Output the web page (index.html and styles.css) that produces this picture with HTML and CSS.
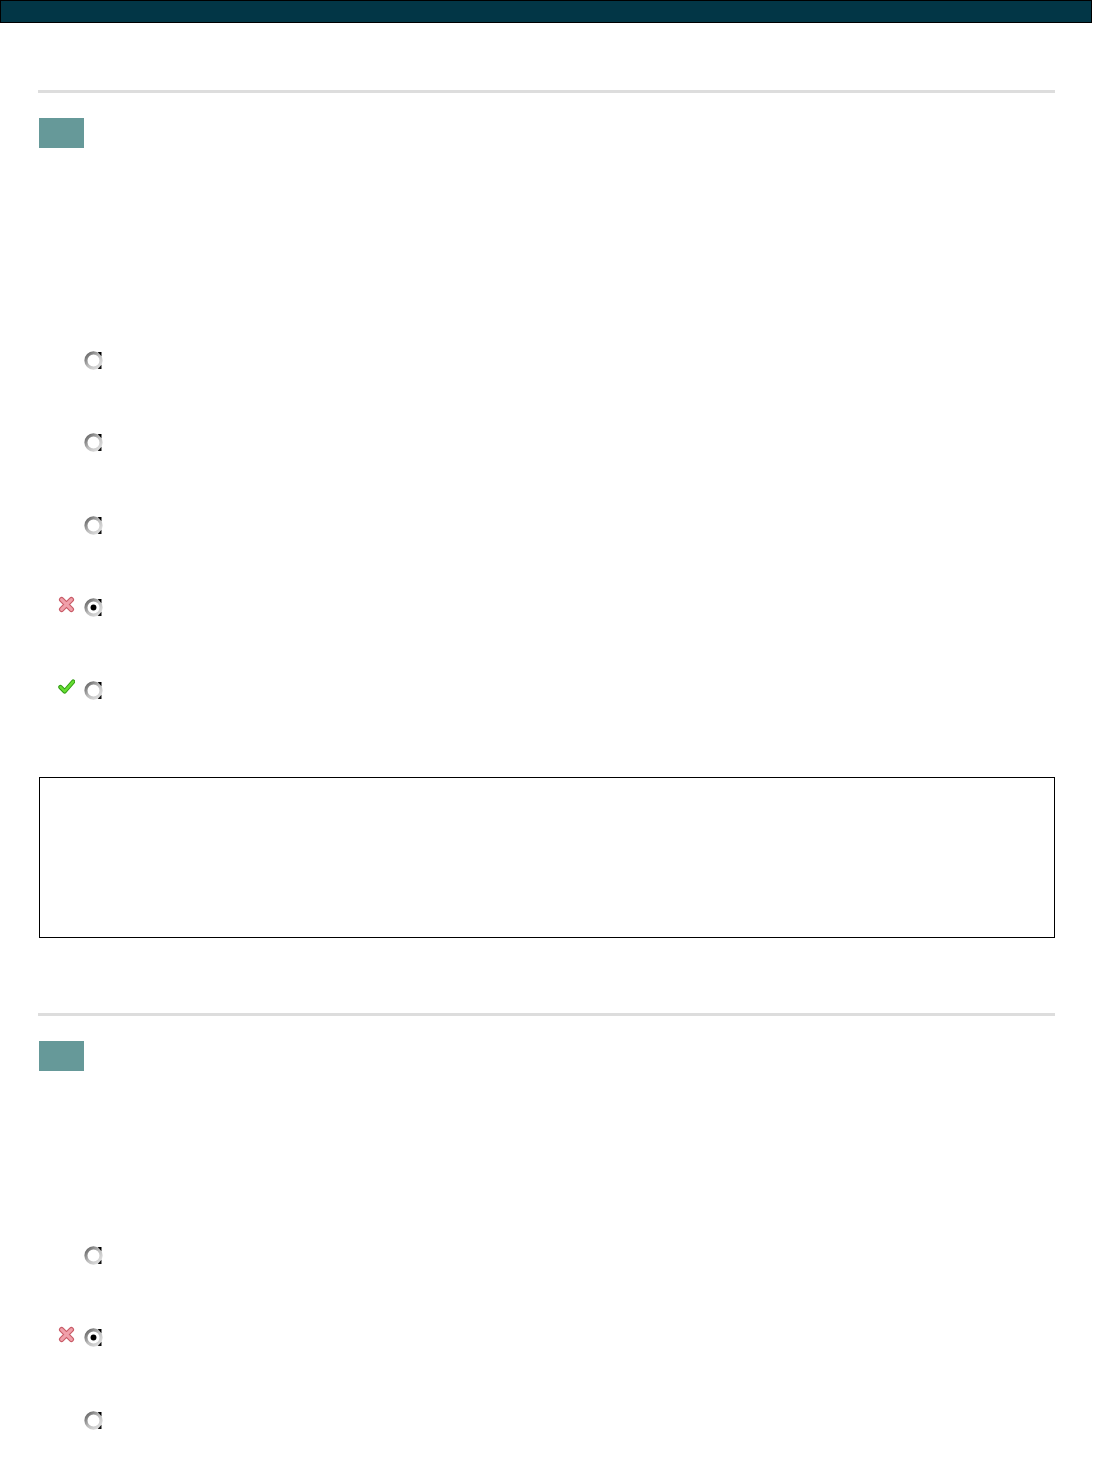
FILE: index.html
```html
<!DOCTYPE html>
<html>
<head>
<meta charset="utf-8">
<title>Quiz</title>
<link rel="stylesheet" href="styles.css">
</head>
<body>
<div class="topbar"></div>
<main class="page">
  <section class="question q1">
    <hr class="rule">
    <div class="qnum"></div>
    <div class="options first">
      <div class="opt"><span class="mark"></span><svg class="radio" viewBox="0 0 20 20"><use href="#r"/></svg></div>
      <div class="opt"><span class="mark"></span><svg class="radio" viewBox="0 0 20 20"><use href="#r"/></svg></div>
      <div class="opt"><span class="mark"></span><svg class="radio" viewBox="0 0 20 20"><use href="#r"/></svg></div>
      <div class="opt"><span class="mark"><svg viewBox="0 0 14 14" class="icon"><path d="M3 3 L11 11 M11 3 L3 11" stroke="#c85a66" stroke-width="4.4" stroke-linecap="round"/><path d="M3 3 L11 11 M11 3 L3 11" stroke="#f0a0aa" stroke-width="2.6" stroke-linecap="round"/></svg></span><svg class="radio" viewBox="0 0 20 20"><use href="#r"/><circle cx="10" cy="10" r="2.8" fill="#000"/></svg></div>
      <div class="opt"><span class="mark"><svg viewBox="0 0 14 14" class="icon"><path d="M2 7.5 L5.5 11 L12.5 3" fill="none" stroke="#2f9a10" stroke-width="3.6" stroke-linecap="round" stroke-linejoin="round"/><path d="M2 7.5 L5.5 11 L12.5 3" fill="none" stroke="#66dd33" stroke-width="2" stroke-linecap="round" stroke-linejoin="round"/></svg></span><svg class="radio" viewBox="0 0 20 20"><use href="#r"/></svg></div>
    </div>
    <div class="answerbox"></div>
  </section>
  <section class="question q2">
    <hr class="rule">
    <div class="qnum"></div>
    <div class="options second">
      <div class="opt"><span class="mark"></span><svg class="radio" viewBox="0 0 20 20"><use href="#r"/></svg></div>
      <div class="opt"><span class="mark"><svg viewBox="0 0 14 14" class="icon"><path d="M3 3 L11 11 M11 3 L3 11" stroke="#c85a66" stroke-width="4.4" stroke-linecap="round"/><path d="M3 3 L11 11 M11 3 L3 11" stroke="#f0a0aa" stroke-width="2.6" stroke-linecap="round"/></svg></span><svg class="radio" viewBox="0 0 20 20"><use href="#r"/><circle cx="10" cy="10" r="2.8" fill="#000"/></svg></div>
      <div class="opt"><span class="mark"></span><svg class="radio" viewBox="0 0 20 20"><use href="#r"/></svg></div>
    </div>
  </section>
</main>
<svg width="0" height="0" class="defs">
  <defs>
    <linearGradient id="g" x1="0" y1="0" x2="1" y2="1">
      <stop offset="0" stop-color="#5e5e5e"/>
      <stop offset="0.5" stop-color="#bdbdbd"/>
      <stop offset="1" stop-color="#e4e4e4"/>
    </linearGradient>
    <g id="r">
      <circle cx="10" cy="10" r="7.2" fill="#fff" stroke="url(#g)" stroke-width="3"/>
      <path d="M14 1.8 L17.6 1.8 L17.6 6 Z" fill="#000"/>
      <path d="M14 18.2 L17.6 18.2 L17.6 14 Z" fill="#111"/>
    </g>
  </defs>
</svg>
</body>
</html>
```

FILE: styles.css
```css
html, body {
  margin: 0;
  padding: 0;
  background: #fff;
  font-family: "Liberation Sans", Arial, sans-serif;
}

.topbar {
  height: 21px;
  background: #023646;
  border: 1px solid #000;
  margin-right: 1px;
}

.page {
  padding: 0 38px;
}

.question {
  display: flex;
  flex-direction: column;
}

.rule {
  margin: 0;
  height: 3px;
  border: 0;
  background: #dddddd;
  width: 1017px;
}

.q1 .rule {
  margin-top: 67px;
}

.q2 .rule {
  margin-top: 75px;
}

.qnum {
  margin: 25px 0 0 1px;
  width: 45px;
  height: 30px;
  background: #669999;
}

.options {
  display: flex;
  flex-direction: column;
  gap: 62.5px;
  padding-left: 20px;
}

.options.first {
  margin-top: 202px;
}

.options.second {
  margin-top: 174px;
}

.opt {
  display: flex;
  align-items: center;
  height: 20px;
}

.mark {
  width: 17px;
  height: 20px;
  margin-right: 8px;
  position: relative;
}

.icon {
  position: absolute;
  left: 0;
  top: -2px;
  width: 17px;
  height: 17px;
}

.radio {
  width: 21px;
  height: 21px;
}

.answerbox {
  margin: 77px 0 0 1px;
  width: 1014px;
  height: 159px;
  border: 1px solid #000;
}

.defs {
  position: absolute;
}
```
